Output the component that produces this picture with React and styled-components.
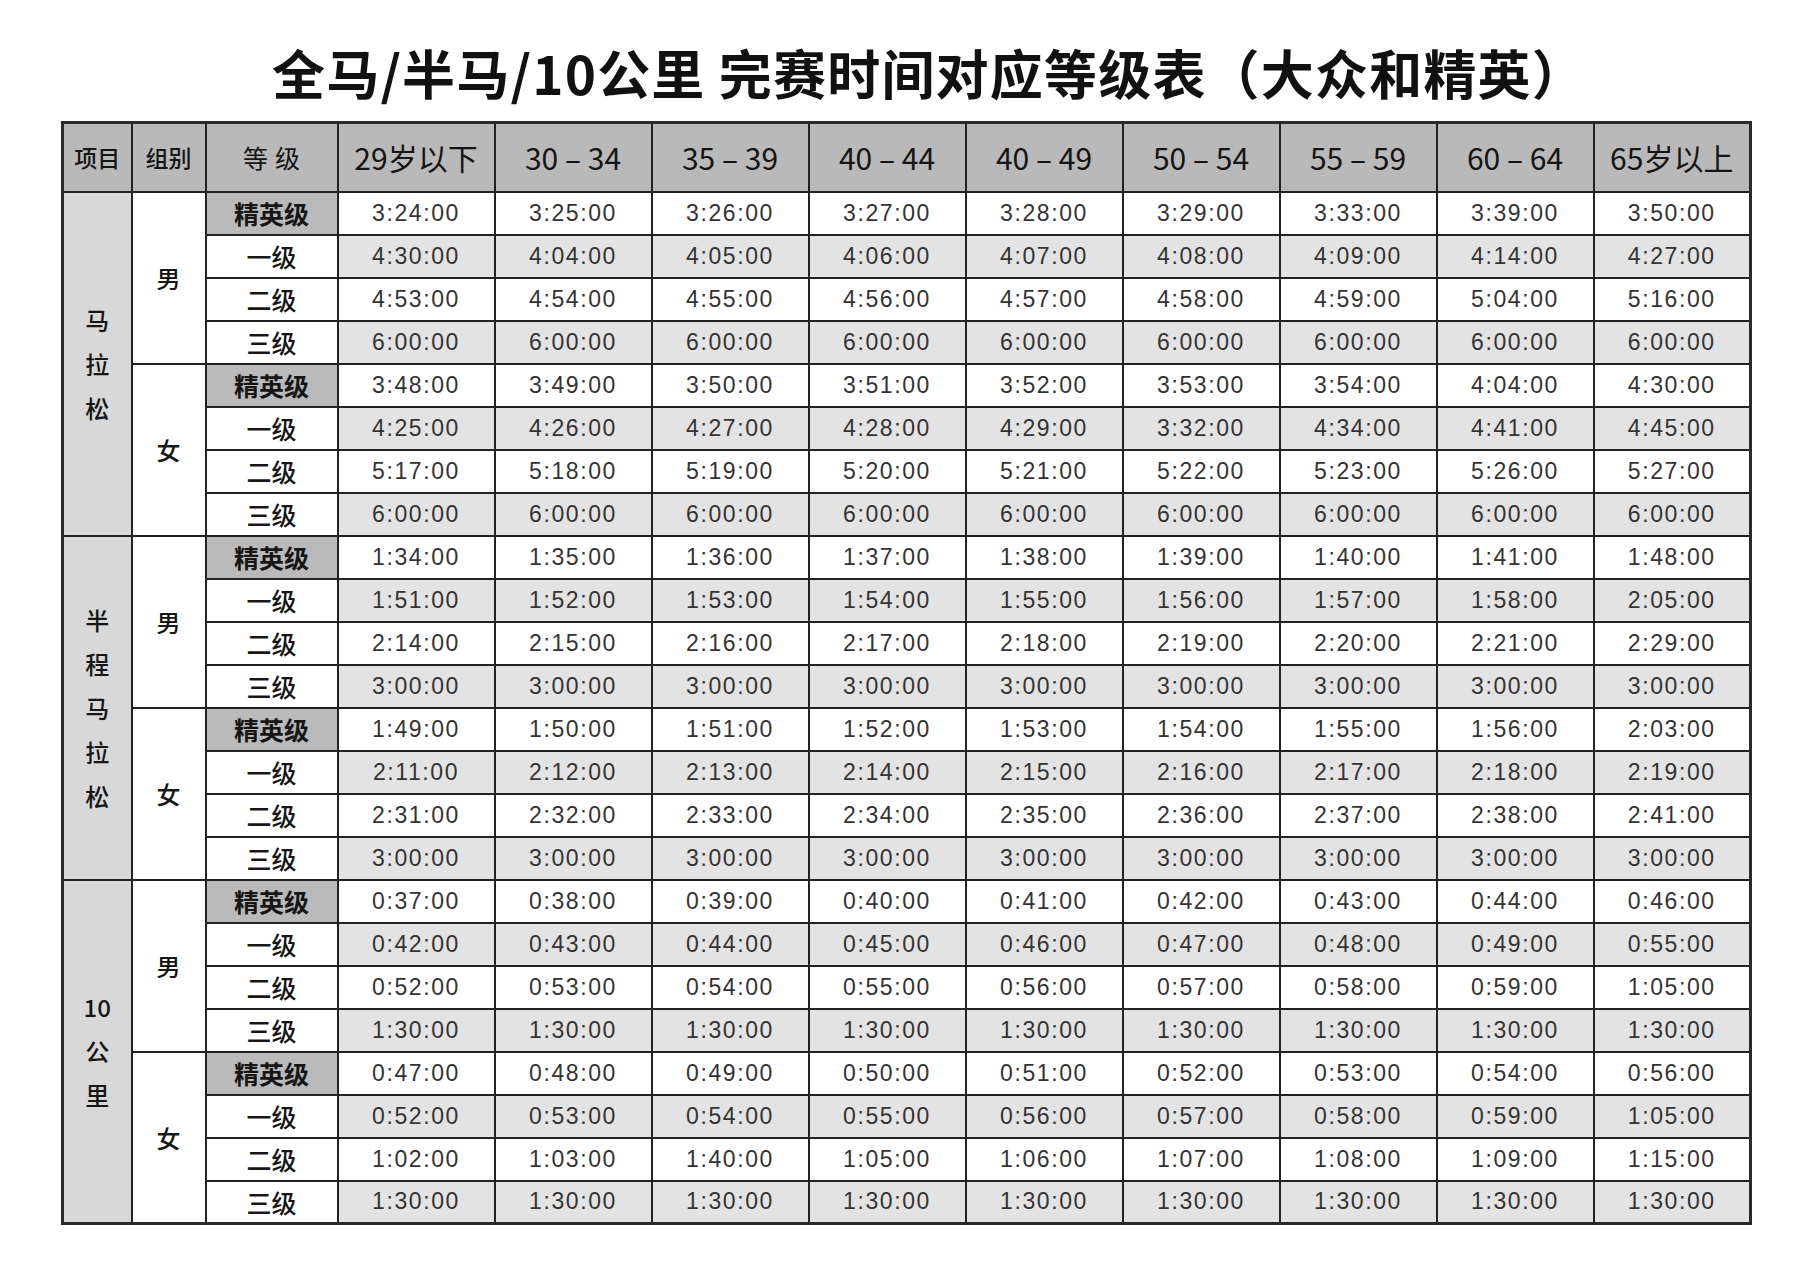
import React from "react";
import styled, { createGlobalStyle } from "styled-components";

const GlobalStyle = createGlobalStyle`
  html, body { margin: 0; padding: 0; background: #ffffff; }
  body { font-family: "Noto Sans CJK SC", "Noto Sans", sans-serif; color: #141414; }
`;

const Page = styled.div`
  width: 1810px;
  box-sizing: border-box;
  padding: 42px 61px 40px;
`;

const Title = styled.h1`
  margin: 0 0 19px;
  padding-left: 48px;
  height: 60px;
  line-height: 60px;
  text-align: center;
  font-family: "Noto Sans CJK SC", sans-serif;
  font-weight: 700;
  font-size: 53px;
  letter-spacing: 1.2px;
  color: #111111;
  white-space: nowrap;
`;

const Table = styled.table`
  width: 1688px;
  border-collapse: collapse;
  table-layout: fixed;
  border: 3px solid #2a2a2a;
`;

const HeadRow = styled.tr`
  height: 69px;
`;

const DataRow = styled.tr`
  height: 43px;
`;

const HeadCell = styled.th`
  padding: 0;
  background: #b9b9b9;
  border: 2px solid #222222;
  text-align: center;
  vertical-align: middle;
  color: #151515;
  white-space: nowrap;
  font-family: "Noto Sans CJK SC", sans-serif;
  font-weight: ${(p) => (p.$kind === "small" ? 500 : 400)};
  font-size: ${(p) => (p.$kind === "age" ? "30px" : p.$kind === "grade" ? "25px" : "23px")};
  letter-spacing: ${(p) => (p.$kind === "grade" ? "7px" : "0px")};
  text-indent: ${(p) => (p.$kind === "grade" ? "7px" : "0px")};
`;

const SectionCell = styled.td`
  padding: 0;
  background: #d8d8d8;
  border: 2px solid #222222;
  text-align: center;
  vertical-align: middle;
`;

const GroupCell = styled.td`
  padding: 0;
  background: #ffffff;
  border: 2px solid #222222;
  text-align: center;
  vertical-align: middle;
  font-size: 24px;
  font-weight: 500;
  color: #161616;
`;

const VLine = styled.span`
  display: block;
  line-height: 44px;
  font-size: 24px;
  font-weight: 500;
  color: #161616;
`;

const GradeCell = styled.td`
  padding: 0;
  background: ${(p) => (p.$elite ? "#bababa" : "#ffffff")};
  border: 2px solid #222222;
  text-align: center;
  vertical-align: middle;
  font-size: 25px;
  font-weight: ${(p) => (p.$elite ? 600 : 500)};
  color: #161616;
  white-space: nowrap;
`;

const TimeCell = styled.td`
  padding: 0;
  background: ${(p) => (p.$shade ? "#e3e3e3" : "#ffffff")};
  border: 2px solid #222222;
  text-align: center;
  vertical-align: middle;
  font-family: "Liberation Sans", Arial, sans-serif;
  font-size: 23px;
  letter-spacing: 1.6px;
  color: #333333;
  white-space: nowrap;
`;

const ages = ["29岁以下", "30 – 34", "35 – 39", "40 – 44", "40 – 49", "50 – 54", "55 – 59", "60 – 64", "65岁以上"];
const grades = ["精英级", "一级", "二级", "三级"];
const same = (v) => Array(9).fill(v);

const sections = [
  {
    lines: ["马", "拉", "松"],
    groups: [
      {
        name: "男",
        rows: [
          ["3:24:00", "3:25:00", "3:26:00", "3:27:00", "3:28:00", "3:29:00", "3:33:00", "3:39:00", "3:50:00"],
          ["4:30:00", "4:04:00", "4:05:00", "4:06:00", "4:07:00", "4:08:00", "4:09:00", "4:14:00", "4:27:00"],
          ["4:53:00", "4:54:00", "4:55:00", "4:56:00", "4:57:00", "4:58:00", "4:59:00", "5:04:00", "5:16:00"],
          same("6:00:00"),
        ],
      },
      {
        name: "女",
        rows: [
          ["3:48:00", "3:49:00", "3:50:00", "3:51:00", "3:52:00", "3:53:00", "3:54:00", "4:04:00", "4:30:00"],
          ["4:25:00", "4:26:00", "4:27:00", "4:28:00", "4:29:00", "3:32:00", "4:34:00", "4:41:00", "4:45:00"],
          ["5:17:00", "5:18:00", "5:19:00", "5:20:00", "5:21:00", "5:22:00", "5:23:00", "5:26:00", "5:27:00"],
          same("6:00:00"),
        ],
      },
    ],
  },
  {
    lines: ["半", "程", "马", "拉", "松"],
    groups: [
      {
        name: "男",
        rows: [
          ["1:34:00", "1:35:00", "1:36:00", "1:37:00", "1:38:00", "1:39:00", "1:40:00", "1:41:00", "1:48:00"],
          ["1:51:00", "1:52:00", "1:53:00", "1:54:00", "1:55:00", "1:56:00", "1:57:00", "1:58:00", "2:05:00"],
          ["2:14:00", "2:15:00", "2:16:00", "2:17:00", "2:18:00", "2:19:00", "2:20:00", "2:21:00", "2:29:00"],
          same("3:00:00"),
        ],
      },
      {
        name: "女",
        rows: [
          ["1:49:00", "1:50:00", "1:51:00", "1:52:00", "1:53:00", "1:54:00", "1:55:00", "1:56:00", "2:03:00"],
          ["2:11:00", "2:12:00", "2:13:00", "2:14:00", "2:15:00", "2:16:00", "2:17:00", "2:18:00", "2:19:00"],
          ["2:31:00", "2:32:00", "2:33:00", "2:34:00", "2:35:00", "2:36:00", "2:37:00", "2:38:00", "2:41:00"],
          same("3:00:00"),
        ],
      },
    ],
  },
  {
    lines: ["10", "公", "里"],
    groups: [
      {
        name: "男",
        rows: [
          ["0:37:00", "0:38:00", "0:39:00", "0:40:00", "0:41:00", "0:42:00", "0:43:00", "0:44:00", "0:46:00"],
          ["0:42:00", "0:43:00", "0:44:00", "0:45:00", "0:46:00", "0:47:00", "0:48:00", "0:49:00", "0:55:00"],
          ["0:52:00", "0:53:00", "0:54:00", "0:55:00", "0:56:00", "0:57:00", "0:58:00", "0:59:00", "1:05:00"],
          same("1:30:00"),
        ],
      },
      {
        name: "女",
        rows: [
          ["0:47:00", "0:48:00", "0:49:00", "0:50:00", "0:51:00", "0:52:00", "0:53:00", "0:54:00", "0:56:00"],
          ["0:52:00", "0:53:00", "0:54:00", "0:55:00", "0:56:00", "0:57:00", "0:58:00", "0:59:00", "1:05:00"],
          ["1:02:00", "1:03:00", "1:40:00", "1:05:00", "1:06:00", "1:07:00", "1:08:00", "1:09:00", "1:15:00"],
          same("1:30:00"),
        ],
      },
    ],
  },
];

export default function App() {
  return (
    <>
      <GlobalStyle />
      <Page>
        <Title>全马/半马/10公里 完赛时间对应等级表（大众和精英）</Title>
        <Table>
          <colgroup>
            <col style={{ width: 69 }} />
            <col style={{ width: 74 }} />
            <col style={{ width: 132 }} />
            {ages.map((a) => (
              <col key={a} style={{ width: 157 }} />
            ))}
          </colgroup>
          <thead>
            <HeadRow>
              <HeadCell $kind="small">项目</HeadCell>
              <HeadCell $kind="small">组别</HeadCell>
              <HeadCell $kind="grade">等级</HeadCell>
              {ages.map((a) => (
                <HeadCell key={a} $kind="age">
                  {a}
                </HeadCell>
              ))}
            </HeadRow>
          </thead>
          <tbody>
            {sections.map((sec, si) =>
              sec.groups.map((g, gi) =>
                g.rows.map((row, ri) => (
                  <DataRow key={`${si}-${gi}-${ri}`}>
                    {gi === 0 && ri === 0 && (
                      <SectionCell rowSpan={8}>
                        {sec.lines.map((l, li) => (
                          <VLine key={li}>{l}</VLine>
                        ))}
                      </SectionCell>
                    )}
                    {ri === 0 && <GroupCell rowSpan={4}>{g.name}</GroupCell>}
                    <GradeCell $elite={ri === 0}>{grades[ri]}</GradeCell>
                    {row.map((t, ci) => (
                      <TimeCell key={ci} $shade={ri % 2 === 1}>
                        {t}
                      </TimeCell>
                    ))}
                  </DataRow>
                ))
              )
            )}
          </tbody>
        </Table>
      </Page>
    </>
  );
}
